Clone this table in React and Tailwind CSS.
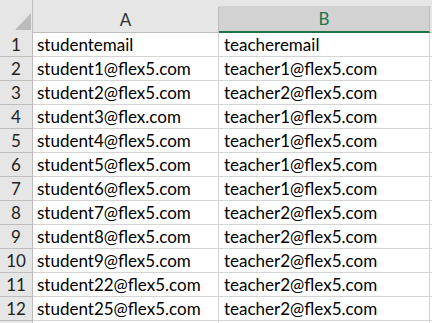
import React from 'react';

const rows = [
  ['studentemail', 'teacheremail'],
  ['student1@flex5.com', 'teacher1@flex5.com'],
  ['student2@flex5.com', 'teacher2@flex5.com'],
  ['student3@flex.com', 'teacher1@flex5.com'],
  ['student4@flex5.com', 'teacher1@flex5.com'],
  ['student5@flex5.com', 'teacher1@flex5.com'],
  ['student6@flex5.com', 'teacher1@flex5.com'],
  ['student7@flex5.com', 'teacher2@flex5.com'],
  ['student8@flex5.com', 'teacher2@flex5.com'],
  ['student9@flex5.com', 'teacher2@flex5.com'],
  ['student22@flex5.com', 'teacher2@flex5.com'],
  ['student25@flex5.com', 'teacher2@flex5.com'],
];

const Sheet = () => {
  return (
    <div className="w-[432px] h-[323px] overflow-hidden bg-white text-black font-['Lato',sans-serif]">
      {/* column headers */}
      <div className="flex h-[33px] bg-[#e6e6e6]">
        <div className="relative w-[33px] shrink-0 border-r border-[#bdbdbd]">
          <svg className="absolute left-[15px] top-[13px]" width="16" height="17" viewBox="0 0 16 17">
            <polygon points="16,0 16,17 0,17" fill="#bcbcbc" />
          </svg>
        </div>
        <div className="flex flex-col w-[186px] shrink-0">
          <div className="h-[10px]" />
          <div className="flex-1 flex items-center justify-center bg-[#e6e6e6] border-r border-b border-[#bdbdbd] text-[17px] text-[#333]">
            A
          </div>
        </div>
        <div className="flex flex-col w-[211px] shrink-0">
          <div className="h-[10px]" />
          <div className="flex-1 flex items-center justify-center bg-[#d2d2d2] border-r border-[#bdbdbd] border-b-2 border-b-[#217346] text-[17px] text-[#217346]">
            B
          </div>
        </div>
        <div className="flex flex-col flex-1">
          <div className="h-[10px]" />
          <div className="flex-1 border-b border-[#bdbdbd]" />
        </div>
      </div>

      {/* rows */}
      {rows.map((row, i) => (
        <div key={i} className="flex h-[24px]">
          <div className="w-[33px] shrink-0 flex items-center justify-center bg-[#e6e6e6] border-r border-b border-[#bdbdbd] text-[17px] text-[#222]">
            {i + 1}
          </div>
          <div className="w-[186px] shrink-0 flex items-center pl-[4px] border-r border-b border-[#d4d4d4] text-[17px] whitespace-nowrap">
            {row[0]}
          </div>
          <div className="w-[211px] shrink-0 flex items-center pl-[5px] border-r border-b border-[#d4d4d4] text-[17px] whitespace-nowrap">
            {row[1]}
          </div>
          <div className="flex-1 border-b border-[#d4d4d4]" />
        </div>
      ))}
      <div className="flex h-[24px]">
        <div className="w-[33px] shrink-0 bg-[#e6e6e6] border-r border-[#bdbdbd]" />
        <div className="w-[186px] shrink-0 border-r border-[#d4d4d4]" />
        <div className="w-[211px] shrink-0 border-r border-[#d4d4d4]" />
      </div>
    </div>
  );
};

export default function App() {
  return <Sheet />;
}
